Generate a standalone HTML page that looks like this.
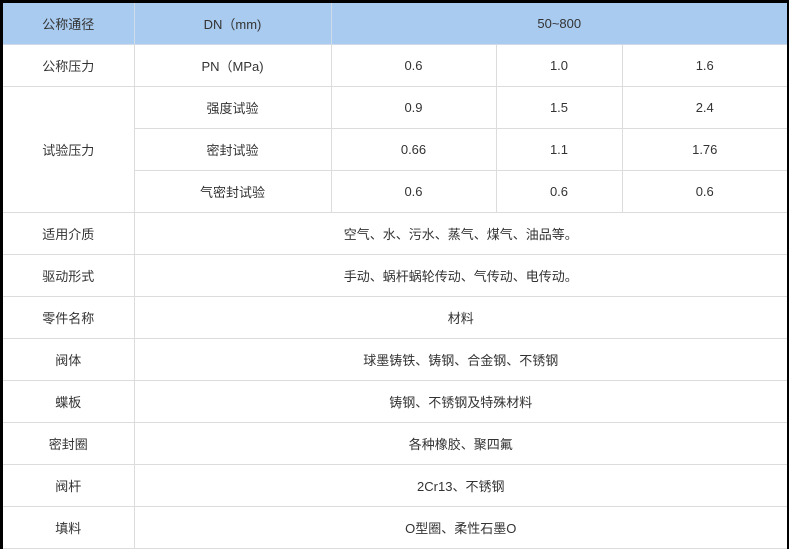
<!DOCTYPE html>
<html><head><meta charset="utf-8"><style>
html,body{margin:0;padding:0;background:#000;width:789px;height:548px;overflow:hidden}
table{position:absolute;left:3px;top:3px;width:784px;border-collapse:collapse;table-layout:fixed;background:#fff;
font-family:"Liberation Sans","Noto Sans CJK SC",sans-serif;font-size:13px;color:#333}
td{border:1px solid #dcdcdc;height:41px;padding:0;text-align:center;vertical-align:middle}
tr:first-child td{background:#a9cbf0;border-top:none;border-color:#d0dbe8}
tr td:first-child{border-left:none}
tr td:last-child{border-right:none}
</style></head><body>
<table>
<colgroup><col style="width:131px"><col style="width:197px"><col style="width:165px"><col style="width:126px"><col style="width:165px"></colgroup>
<tr><td>公称通径</td><td>DN（mm)</td><td colspan="3">50~800</td></tr>
<tr><td>公称压力</td><td>PN（MPa)</td><td>0.6</td><td>1.0</td><td>1.6</td></tr>
<tr><td rowspan="3">试验压力</td><td>强度试验</td><td>0.9</td><td>1.5</td><td>2.4</td></tr>
<tr><td>密封试验</td><td>0.66</td><td>1.1</td><td>1.76</td></tr>
<tr><td>气密封试验</td><td>0.6</td><td>0.6</td><td>0.6</td></tr>
<tr><td>适用介质</td><td colspan="4">空气、水、污水、蒸气、煤气、油品等。</td></tr>
<tr><td>驱动形式</td><td colspan="4">手动、蜗杆蜗轮传动、气传动、电传动。</td></tr>
<tr><td>零件名称</td><td colspan="4">材料</td></tr>
<tr><td>阀体</td><td colspan="4">球墨铸铁、铸钢、合金钢、不锈钢</td></tr>
<tr><td>蝶板</td><td colspan="4">铸钢、不锈钢及特殊材料</td></tr>
<tr><td>密封圈</td><td colspan="4">各种橡胶、聚四氟</td></tr>
<tr><td>阀杆</td><td colspan="4">2Cr13、不锈钢</td></tr>
<tr><td>填料</td><td colspan="4">O型圈、柔性石墨O</td></tr>
</table>
</body></html>
